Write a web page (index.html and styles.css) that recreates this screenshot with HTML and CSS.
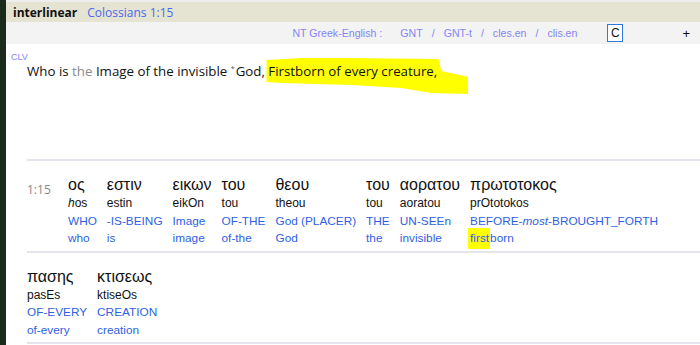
FILE: index.html
```html
<!DOCTYPE html>
<html lang="en">
<head>
    <meta charset="UTF-8">
    <title>interlinear - Colossians 1:15</title>
    <link rel="stylesheet" href="styles.css">
</head>
<body>

    <div class="desk"></div>

    <div class="janela">

        <div class="titulo">
            <span class="nome">interlinear</span>
            <span class="ref">Colossians 1:15</span>
        </div>

        <div class="versoes">
            <div class="links">
                <span class="grupo">NT Greek-English :</span>
                <a href="#">GNT</a><span class="barra">/</span>
                <a href="#">GNT-t</a><span class="barra">/</span>
                <a href="#">cles.en</a><span class="barra">/</span>
                <a href="#">clis.en</a>
            </div>
            <span class="botao-c">C</span>
            <span class="mais">+</span>
        </div>

        <div class="verso">
            <div class="clv">CLV</div>
            <p class="texto">Who is <span class="art">the</span> Image of the invisible <sup>*</sup>God<span class="marca">, Firstborn of every creature,</span></p>
        </div>

        <div class="linha">
            <div class="num">1:15</div>
            <div class="palavra"><span class="gr">ος</span><span class="tr"><i>h</i>os</span><span class="en">WHO</span><span class="en">who</span></div>
            <div class="palavra"><span class="gr">εστιν</span><span class="tr">estin</span><span class="en">-IS-BEING</span><span class="en">is</span></div>
            <div class="palavra"><span class="gr">εικων</span><span class="tr">eikOn</span><span class="en">Image</span><span class="en">image</span></div>
            <div class="palavra"><span class="gr">του</span><span class="tr">tou</span><span class="en">OF-THE</span><span class="en">of-the</span></div>
            <div class="palavra"><span class="gr">θεου</span><span class="tr">theou</span><span class="en">God (PLACER)</span><span class="en">God</span></div>
            <div class="palavra"><span class="gr">του</span><span class="tr">tou</span><span class="en">THE</span><span class="en">the</span></div>
            <div class="palavra"><span class="gr">αορατου</span><span class="tr">aoratou</span><span class="en">UN-SEEn</span><span class="en">invisible</span></div>
            <div class="palavra"><span class="gr">πρωτοτοκος</span><span class="tr">prOtotokos</span><span class="en">BEFORE-<i>most</i>-BROUGHT_FORTH</span><span class="en"><span class="amarelo">first</span>born</span></div>
        </div>

        <div class="linha">
            <div class="palavra"><span class="gr">πασης</span><span class="tr">pasEs</span><span class="en">OF-EVERY</span><span class="en">of-every</span></div>
            <div class="palavra"><span class="gr">κτισεως</span><span class="tr">ktiseOs</span><span class="en">CREATION</span><span class="en">creation</span></div>
        </div>

    </div>

</body>
</html>
```

FILE: styles.css
```css
body {
    margin: 0;
    padding: 0;
    display: flex;
    min-height: 345px;
    background-color: #1c261c;
    font-family: "Liberation Sans", Arial, sans-serif;
    overflow: hidden;
}

.desk {
    width: 6px;
    background-color: #1b2a1b;
}

.janela {
    flex: 1;
    background-color: white;
    border-top: 2px solid #eeeeee;
}

/* Barra de titulo */
.titulo {
    background-color: #e5e3d1;
    height: 20px;
    display: flex;
    align-items: center;
    padding-left: 7px;
    font-family: "Open Sans", sans-serif;
    font-size: 12px;
}

.nome {
    font-weight: bold;
    color: #111;
    margin-right: 10px;
}

.ref {
    color: #4a68ee;
}

/* Barra das versoes */
.versoes {
    background-color: #f3f3f3;
    height: 22px;
    display: flex;
    align-items: center;
    font-size: 10.6px;
    color: #8585f4;
}

.links {
    margin-left: auto;
    display: flex;
    align-items: center;
}

.grupo {
    margin-right: 18px;
}

.links a {
    color: #8585f4;
    text-decoration: none;
}

.barra {
    margin: 0 9px;
}

.botao-c {
    margin-left: 30px;
    width: 14px;
    height: 16px;
    border: 1px solid #2a7be0;
    background-color: white;
    color: #111;
    font-size: 12px;
    text-align: center;
    line-height: 16px;
}

.mais {
    margin-left: 59px;
    margin-right: 10px;
    color: #111;
    font-size: 13px;
}

/* Verso */
.verso {
    height: 115px;
    border-bottom: 2px solid #e4e3ee;
    margin-left: 21px;
}

.clv {
    position: relative;
    left: -16px;
    padding-top: 8px;
    font-size: 9px;
    color: #8888f2;
}

.texto {
    margin: 0;
    font-family: "Open Sans", sans-serif;
    font-size: 13.3px;
    color: #111;
}

.art {
    color: #8a8a8a;
}

.texto sup {
    font-size: 7px;
    color: #555;
    vertical-align: 5px;
    margin-right: 1px;
}

/* marca amarela feita a mao */
.marca {
    position: relative;
    z-index: 1;
}

.marca::before {
    content: "";
    position: absolute;
    left: 5px;
    top: -4px;
    width: 202px;
    height: 36px;
    background-color: #ffff00;
    z-index: -1;
    clip-path: polygon(0 2px, 35px 0, 80px 0, 172px 1px, 175px 13px, 202px 19px, 202px 36px, 165px 35px, 135px 30px, 85px 27px, 15px 25px, 0 24px);
}

/* Interlinear */
.linha {
    margin-left: 21px;
    display: flex;
    flex-wrap: wrap;
    gap: 10px;
    padding: 14px 0 3px;
    border-bottom: 2px solid #e4e3ee;
}

.num {
    width: 31px;
    padding-top: 6px;
    font-family: "Open Sans", sans-serif;
    font-size: 12px;
    color: #888;
}

.palavra {
    display: flex;
    flex-direction: column;
}

.gr {
    font-size: 16px;
    line-height: 20px;
    color: #111;
}

.tr {
    font-size: 12px;
    line-height: 17.5px;
    color: #111;
}

.en {
    font-size: 11.8px;
    line-height: 17.5px;
    color: #2f5fe3;
}

.amarelo {
    background-color: #ffff00;
    padding: 3px 1px 4px 2px;
    margin-left: -2px;
}
```
